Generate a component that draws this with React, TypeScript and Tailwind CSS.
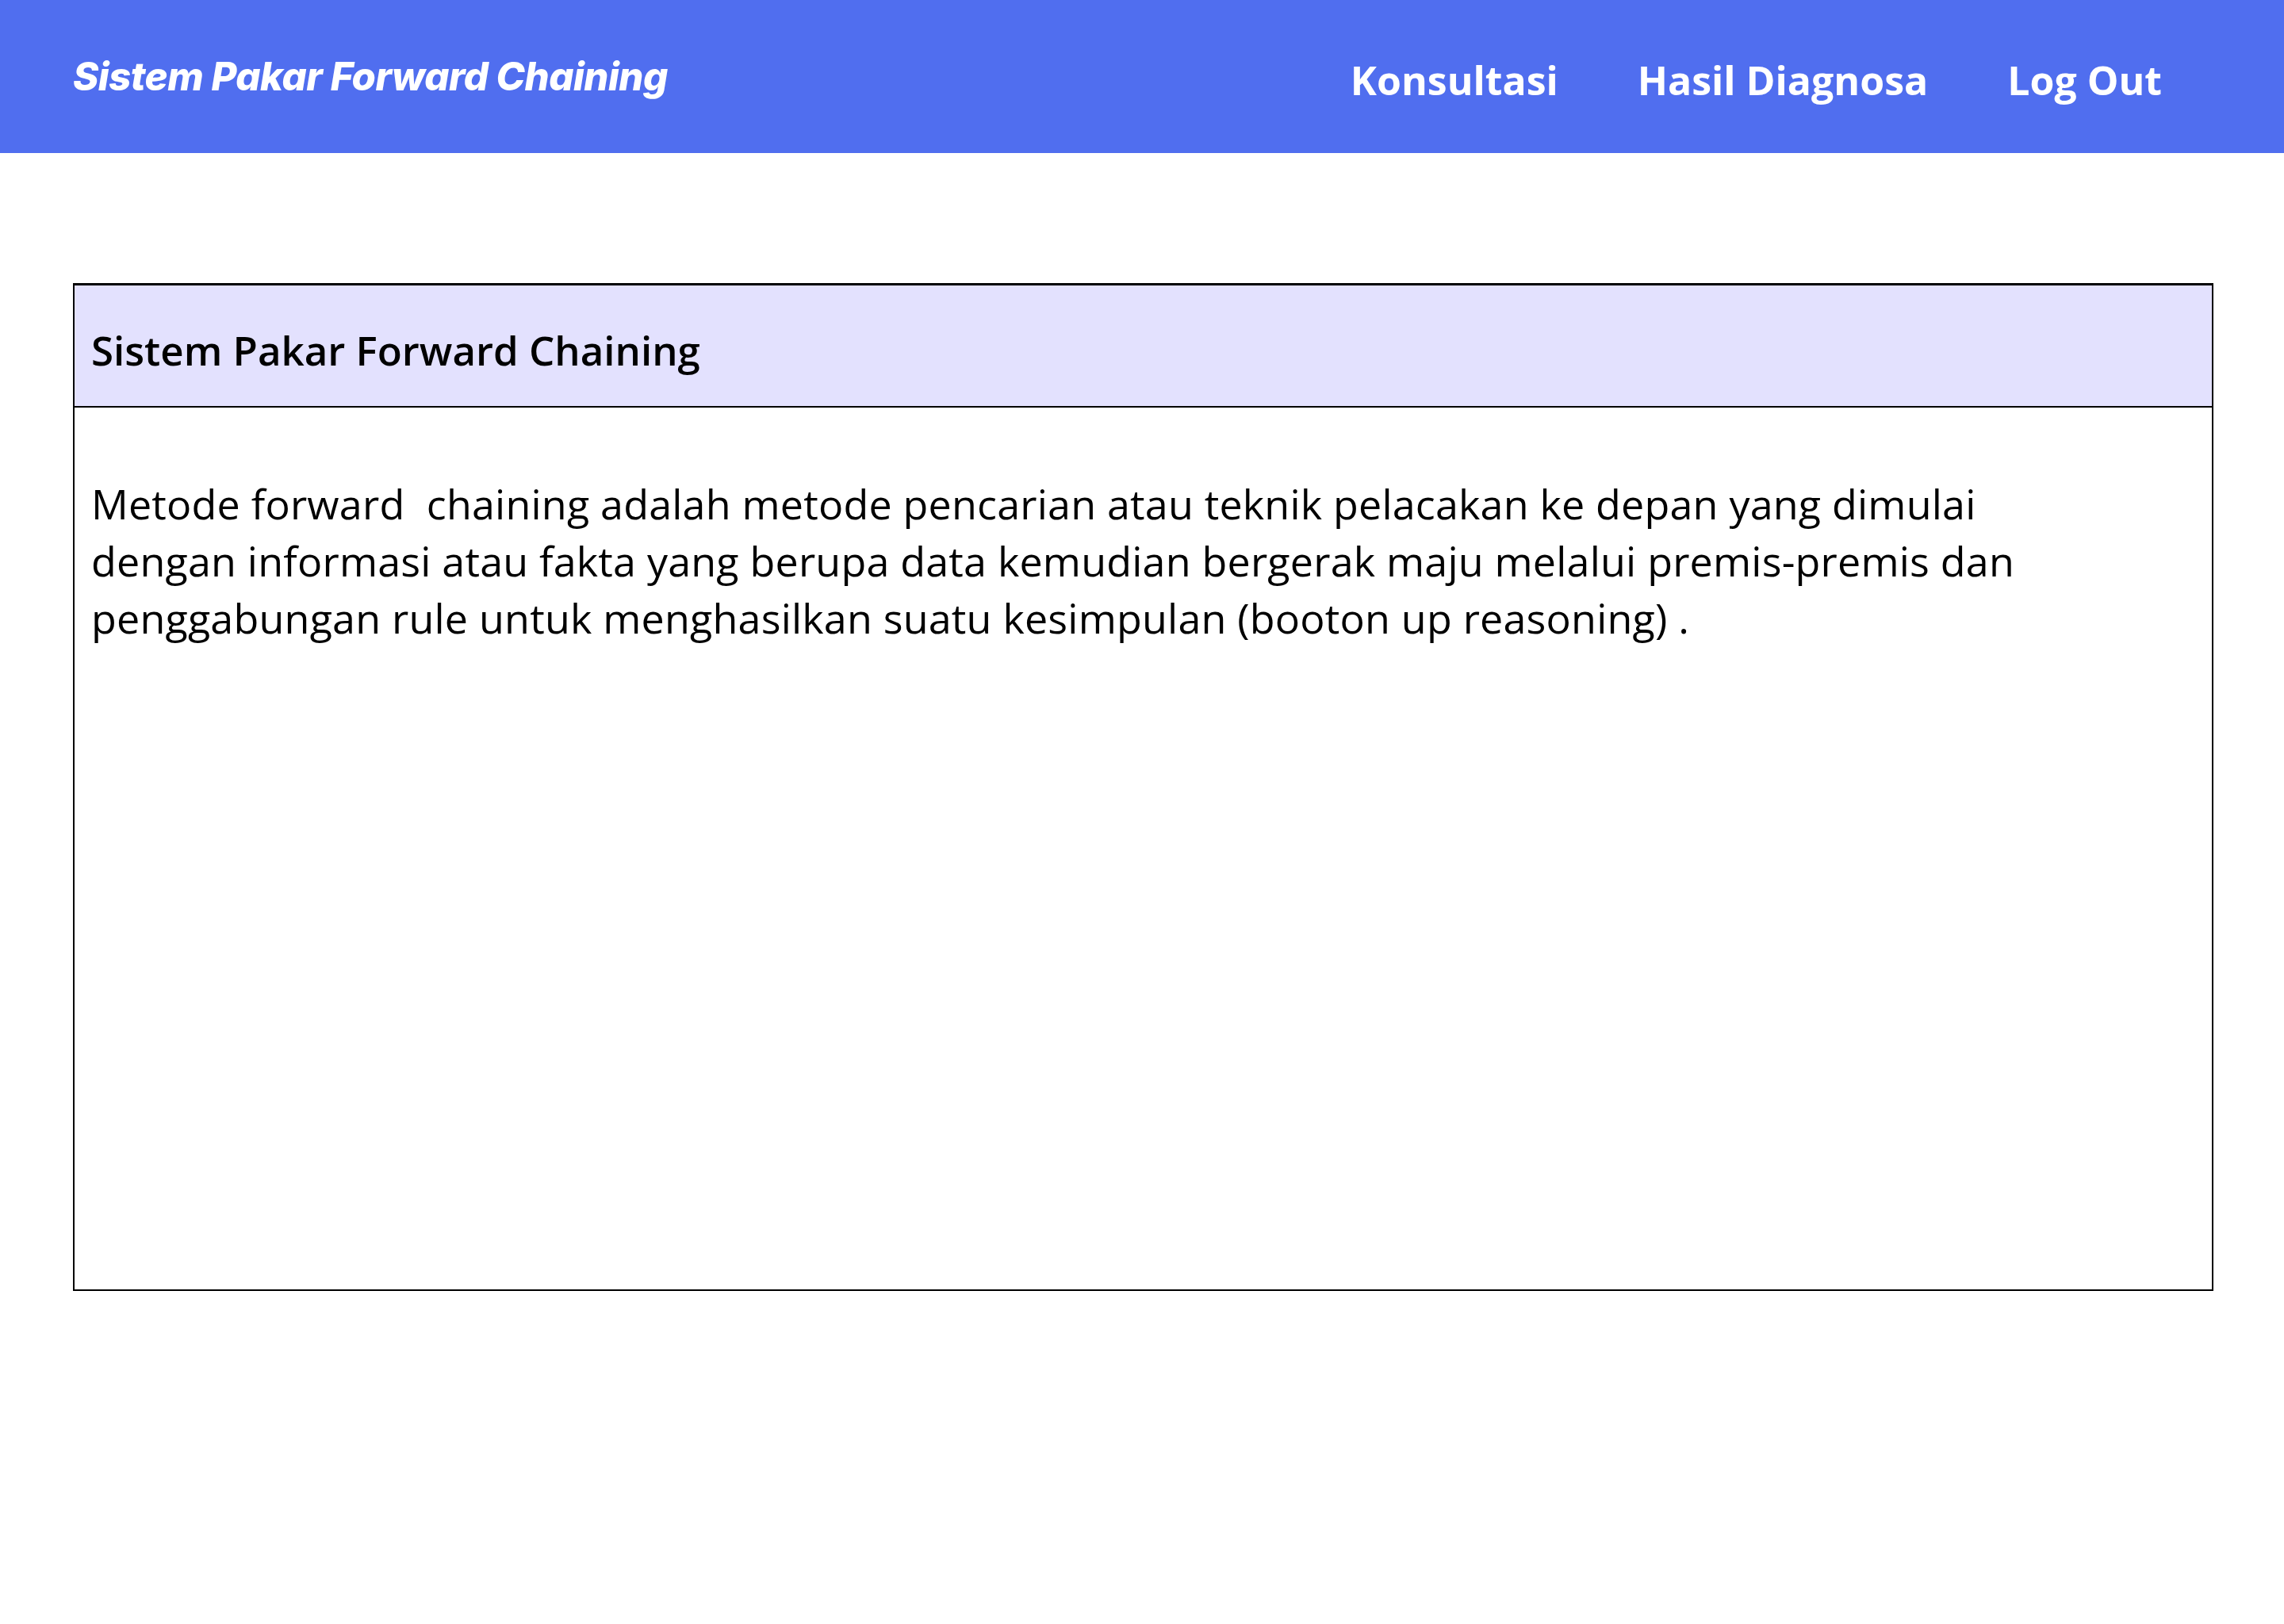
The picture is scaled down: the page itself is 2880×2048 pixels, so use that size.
const Navbar = () => {
  return (
    <nav className="w-full h-[193px] bg-[#506EEF] flex items-start justify-between pl-[92px] pr-[154px]">
      <p className="pt-[72px] text-[49px] leading-none font-extrabold italic text-white font-['Inter',sans-serif] tracking-[-0.5px]">
        Sistem Pakar Forward Chaining
      </p>
      <div className="flex gap-[100px] pt-[76px] text-[50px] leading-none font-bold text-white font-['Open_Sans',sans-serif]">
        <a href="#">Konsultasi</a>
        <a href="#">Hasil Diagnosa</a>
        <a href="#">Log Out</a>
      </div>
    </nav>
  );
};

export default function App() {
  return (
    <div className="min-h-screen bg-white font-['Open_Sans',sans-serif] text-black">
      <Navbar />
      <main className="ml-[92px] mr-[89px] mt-[164px]">
        <div className="h-[1271px] border-2 border-t-[3px] border-black">
          <div className="h-[154px] border-b-2 border-black bg-[#E3E1FE] pl-[21px] pt-[56px]">
            <h1 className="text-[51px] leading-none font-semibold">Sistem Pakar Forward Chaining</h1>
          </div>
          <div className="pl-[21px] pt-[85px]">
            <p className="text-[52px] leading-[72px] tracking-[0.2px]">
              Metode forward&nbsp; chaining adalah metode pencarian atau teknik pelacakan ke depan yang dimulai
              <br />
              dengan informasi atau fakta yang berupa data kemudian bergerak maju melalui premis-premis dan
              <br />
              penggabungan rule untuk menghasilkan suatu kesimpulan (booton up reasoning) .
            </p>
          </div>
        </div>
      </main>
    </div>
  );
}
